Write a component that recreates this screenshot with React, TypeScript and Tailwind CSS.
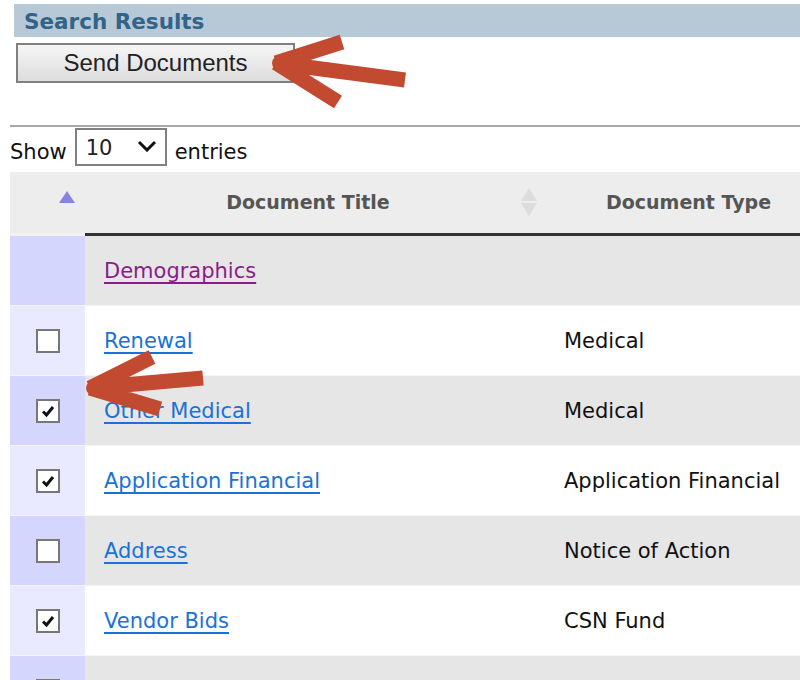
import { useState } from "react";

type Doc = {
  title: string;
  type: string;
  checked?: boolean;
  group?: boolean;
};

const docs: Doc[] = [
  { title: "Demographics", type: "", group: true },
  { title: "Renewal", type: "Medical", checked: false },
  { title: "Other Medical", type: "Medical", checked: true },
  { title: "Application Financial", type: "Application Financial", checked: true },
  { title: "Address", type: "Notice of Action", checked: false },
  { title: "Vendor Bids", type: "CSN Fund", checked: true },
  { title: "", type: "", checked: false },
];

const font = { fontFamily: "Tahoma, 'DejaVu Sans', Verdana, sans-serif" };

// hand-drawn style pointer: tip, shaft end, two wing ends
function Arrow({
  className,
  tip,
  tail,
  wings,
  vb,
}: {
  className: string;
  tip: [number, number];
  tail: [number, number];
  wings: [[number, number], [number, number]];
  vb: string;
}) {
  const [tx, ty] = tip;
  return (
    <svg className={className} viewBox={vb} fill="none">
      <path
        d={`M${tx} ${ty} L${tail[0]} ${tail[1]} M${tx} ${ty} L${wings[0][0]} ${wings[0][1]} M${tx} ${ty} L${wings[1][0]} ${wings[1][1]}`}
        stroke="#c24a30"
        strokeWidth="15"
        strokeLinecap="butt"
        strokeLinejoin="miter"
      />
      <circle cx={tx + 3} cy={ty} r="7" fill="#c24a30" />
    </svg>
  );
}

function Check({ on, onClick }: { on: boolean; onClick: () => void }) {
  return (
    <button
      onClick={onClick}
      className="w-[24px] h-[24px] border-2 border-[#777] bg-white flex items-center justify-center"
    >
      {on && (
        <svg viewBox="0 0 16 16" className="w-[16px] h-[16px]">
          <path d="M3 8.5 L6.5 12 L13 4" stroke="#111" strokeWidth="3" fill="none" />
        </svg>
      )}
    </button>
  );
}

export default function App() {
  const [rows, setRows] = useState(docs);

  const toggle = (i: number) =>
    setRows((r) => r.map((d, j) => (j === i ? { ...d, checked: !d.checked } : d)));

  return (
    <div className="relative w-[800px] h-[680px] overflow-hidden bg-white" style={font}>
      <div className="ml-[14px] mt-[4px] h-[33px] bg-[#b7c8d6] pl-[10px] pt-[3px] flex items-center">
        <span className="text-[21.5px] font-bold text-[#32638a]">Search Results</span>
      </div>

      <button
        className="ml-[16px] mt-[6px] w-[279px] h-[40px] border-2 border-[#808080] bg-gradient-to-b from-[#f6f6f6] to-[#dddddd] text-[24px] text-[#222] pb-[2px]"
        style={{ fontFamily: "'Liberation Sans', Arial, sans-serif" }}
      >
        Send Documents
      </button>

      <div className="ml-[10px] mt-[42px] border-t-2 border-[#a8a8a8]" />

      <div className="ml-[10px] mt-[1px] h-[38px] flex items-center gap-[8px] text-[21px] text-[#111]">
        <span className="pt-[12px]">Show</span>
        <div className="w-[92px] h-[38px] border-2 border-[#808080] flex items-center justify-between pl-[9px] pr-[8px] pt-[4px]">
          <span className="text-[#222]">10</span>
          <svg viewBox="0 0 20 12" className="w-[20px] h-[12px] mb-[6px]">
            <path d="M2 2 L10 10 L18 2" stroke="#111" strokeWidth="3" fill="none" />
          </svg>
        </div>
        <span className="pt-[12px]">entries</span>
      </div>

      <div className="ml-[10px] mt-[6px]">
        <div className="grid grid-cols-[75px_460px_1fr] h-[61px] bg-[#ededed] text-[19px] font-bold text-[#555]">
          <div className="flex items-center justify-center pb-[12px] pl-[38px]">
            <svg viewBox="0 0 16 12" className="w-[16px] h-[12px]">
              <path d="M8 0 L16 12 L0 12 Z" fill="#8585e0" />
            </svg>
          </div>
          <div className="relative flex items-center justify-center pr-[14px]">
            Document Title
            <svg viewBox="0 0 16 28" className="absolute right-[8px] top-[16px] w-[16px] h-[28px]">
              <path d="M8 0 L16 13 L0 13 Z M8 28 L16 15 L0 15 Z" fill="#dcdcdc" />
            </svg>
          </div>
          <div className="flex items-center pl-[61px]">Document Type</div>
        </div>
        <div className="grid grid-cols-[75px_1fr] h-[3px]">
          <div className="bg-[#f2f2f2]" />
          <div className="bg-[#333]" />
        </div>

        {rows.map((d, i) => {
          const odd = i % 2 === 0;
          return (
            <div
              key={i}
              className={`grid grid-cols-[75px_460px_1fr] h-[70px] items-center text-[21px] border-b border-[#f4f4f4] ${
                odd ? "bg-[#e6e6e6]" : "bg-white"
              }`}
            >
              <div
                className={`h-full flex items-center justify-center ${
                  odd ? "bg-[#d4d6fe]" : "bg-[#e9e9ff]"
                }`}
              >
                {!d.group && <Check on={!!d.checked} onClick={() => toggle(i)} />}
              </div>
              <div className="pl-[19px] pt-[3px]">
                {d.title && (
                  <a
                    href="#"
                    className={`underline underline-offset-[4px] ${
                      d.group ? "text-[#8a1c8a]" : "text-[#1a72d8]"
                    }`}
                  >
                    {d.title}
                  </a>
                )}
              </div>
              <div className="pl-[19px] pt-[3px] text-[#111]">{d.type}</div>
            </div>
          );
        })}
      </div>

      <Arrow
        className="absolute left-[266px] top-[30px] w-[150px] h-[85px]"
        vb="0 0 150 85"
        tip={[10, 33]}
        tail={[139, 50]}
        wings={[
          [76, 12],
          [72, 72],
        ]}
      />
      <Arrow
        className="absolute left-[80px] top-[345px] w-[130px] h-[75px]"
        vb="0 0 130 75"
        tip={[10, 43]}
        tail={[123, 33]}
        wings={[
          [72, 12],
          [80, 64],
        ]}
      />
    </div>
  );
}
